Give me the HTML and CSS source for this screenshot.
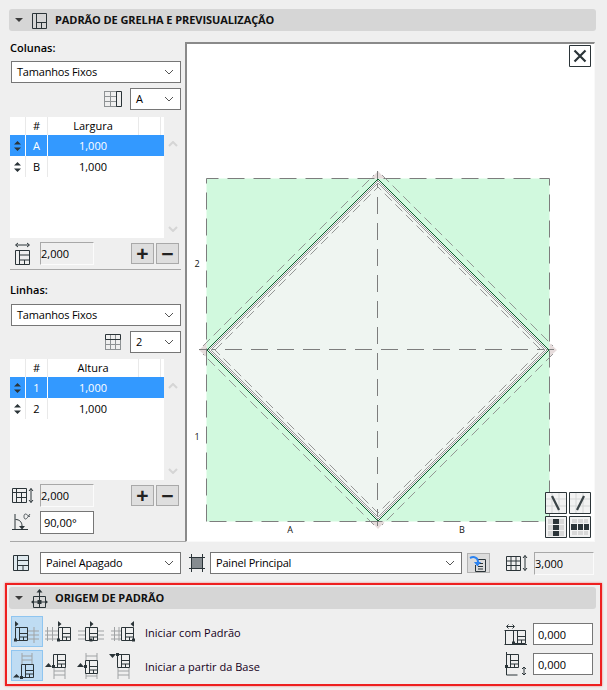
FILE: index.html
```html
<!DOCTYPE html>
<html lang="pt">
<head>
<meta charset="utf-8">
<title>Padrão de grelha</title>
<link rel="stylesheet" href="styles.css">
</head>
<body>
<svg class="defs" width="0" height="0">
  <defs>
    <symbol id="chev" viewBox="0 0 10 6"><path class="s-chev" d="M1 1l4 4 4-4"/></symbol>
    <symbol id="sort" viewBox="0 0 7 10"><path class="f-dark" d="M3.500 0L7 3.500H0zM3.500 10L0 6.500H7z"/></symbol>
    <symbol id="up" viewBox="0 0 10 6"><path class="s-scroll" d="M1 5l4-4 4 4"/></symbol>
    <symbol id="down" viewBox="0 0 10 6"><path class="s-scroll" d="M1 1l4 4 4-4"/></symbol>
    <symbol id="cell" viewBox="0 0 13 14"><path class="s-dark" d="M.5.5H12.500V13.500H.5ZM4.500.5V13.500M4.500 6.500H12.500M4.500 10H12.500M8.500 10V13.500"/></symbol>
  </defs>
</svg>

<main class="app">
  <header class="bar">
    <span class="caret"></span>
    <svg class="bar-icon" width="17" height="17" viewBox="0 0 17 17"><path class="s-dark" d="M1.500 1.500H15.500V16.500H1.500ZM5.500 1.500V16.500M5.500 10.500H15.500M10.500 10.500V16.500"/></svg>
    <h2 class="bar-title">PADRÃO DE GRELHA E PREVISUALIZAÇÃO</h2>
  </header>

  <div class="grid-area">
    <aside class="side">
      <div class="field-label">Colunas:</div>
      <div class="select"><span>Tamanhos Fixos</span><svg class="chev" width="10" height="6"><use href="#chev"/></svg></div>
      <div class="pick-row">
        <svg width="18" height="18" viewBox="0 0 18 18"><path class="s-gray" d="M.5 1.500H12M.5 6.500H12M.5 11.500H12M.5 16.500H12M.5 1V17M6.500 1V17M12.500 1V17"/><path class="s-dark" d="M12.500 1.500H17.500V16.500H12.500Z"/></svg>
        <div class="select small"><span>A</span><svg class="chev" width="10" height="6"><use href="#chev"/></svg></div>
      </div>
      <div class="list">
        <div class="tbl">
          <div class="tr head"><div></div><div>#</div><div>Largura</div><div></div></div>
          <div class="tr sel"><div><svg width="7" height="10"><use href="#sort"/></svg></div><div>A</div><div>1,000</div><div></div></div>
          <div class="tr"><div><svg width="7" height="10"><use href="#sort"/></svg></div><div>B</div><div>1,000</div></div>
        </div>
        <div class="scroll"><svg width="10" height="6"><use href="#up"/></svg><svg width="10" height="6"><use href="#down"/></svg></div>
      </div>
      <div class="total-row">
        <svg width="17" height="23" viewBox="0 0 17 23"><path class="s-dark" d="M2 3H15M4 1L1.500 3 4 5M13 1L15.500 3 13 5M1.500 8.500H15.500V22.500H1.500ZM5.500 8.500V22.500M5.500 13H15.500M5.500 18H15.500M10.500 18V22.500"/></svg>
        <div class="input off">2,000</div>
        <div class="pm"><button class="pm-btn" type="button">+</button><button class="pm-btn" type="button">−</button></div>
      </div>
      <hr class="rule">

      <div class="field-label lines">Linhas:</div>
      <div class="select"><span>Tamanhos Fixos</span><svg class="chev" width="10" height="6"><use href="#chev"/></svg></div>
      <div class="pick-row">
        <svg width="18" height="18" viewBox="0 0 18 18"><path class="s-gray" d="M1 6.500H17M1 11.500H17M1 16.500H17M1.500 6V17M6.500 1V17M11.500 1V17M16.500 6V17"/><path class="s-dark" d="M1.500 1.500H16.500V6.500H1.500Z"/></svg>
        <div class="select small"><span>2</span><svg class="chev" width="10" height="6"><use href="#chev"/></svg></div>
      </div>
      <div class="list lines-list">
        <div class="tbl">
          <div class="tr head"><div></div><div>#</div><div>Altura</div><div></div></div>
          <div class="tr sel"><div><svg width="7" height="10"><use href="#sort"/></svg></div><div>1</div><div>1,000</div><div></div></div>
          <div class="tr"><div><svg width="7" height="10"><use href="#sort"/></svg></div><div>2</div><div>1,000</div></div>
        </div>
        <div class="scroll"><svg width="10" height="6"><use href="#up"/></svg><svg width="10" height="6"><use href="#down"/></svg></div>
      </div>
      <div class="total-row lines-total">
        <svg width="23" height="17" viewBox="0 0 23 17"><path class="s-dark" d="M.5 1.500H14.500V15.500H.5ZM.5 5.500H14.500M4.500 1.500V15.500M9.500 5.500V15.500M4.500 10.500H14.500M19 1.500V15.500M17 4L19 1.500 21 4M17 13L19 15.500 21 13"/></svg>
        <div class="input off">2,000</div>
        <div class="pm"><button class="pm-btn" type="button">+</button><button class="pm-btn" type="button">−</button></div>
      </div>
      <div class="angle-row">
        <svg width="19" height="19" viewBox="0 0 19 19"><path class="s-dark" d="M3 1V17M0 16.500H16M3.500 6.500C7.500 6.500 10 9 10 13"/><path class="f-dark" d="M7 13H13L10 16.500Z"/><path class="s-thin" d="M18 3.500C16 3.500 15 1 13.500 1 12.500 1 12 2 12 3.500S12.500 6 13.500 6C15 6 16 3.500 18 1"/></svg>
        <div class="input">90,00°</div>
      </div>
    </aside>

    <section class="preview">
      <svg class="plan" width="407" height="497" viewBox="187 44 407 497">
        <rect class="green" x="206.500" y="178.500" width="343" height="343"/>
        <path class="diamond-fill" d="M378 179L549 350 378 521 207 350Z"/>
        <path class="pink" d="M378 171L385 178.500H371ZM378 529L371 521.500H385ZM199 350L206.500 343V357ZM557 350L549.500 357V343Z"/>
        <path class="dash-main" d="M206.500 521.500V178.500H549.500V521.500H206.500M377.500 171V528M199 349.500H557"/>
        <path class="line-white" d="M378 182L546 350 378 518 210 350Z"/>
        <path class="line-green" d="M378 179L549 350 378 521 207 350Z"/>
        <path class="line-gray" d="M378 181L547 350 378 519 209 350Z"/>
        <path class="line-gray" d="M378 183L545 350 378 517 211 350Z"/>
        <path class="dash-thin" d="M203 346L374 175M382 175L553 346M553 354L382 525M374 525L203 354"/>
        <path class="dash-thin" d="M215 350L378 187 541 350 378 513Z"/>
        <text class="plan-text" x="290" y="533" text-anchor="middle">A</text>
        <text class="plan-text" x="462" y="533" text-anchor="middle">B</text>
        <text class="plan-text" x="197" y="267" text-anchor="middle">2</text>
        <text class="plan-text" x="197" y="440" text-anchor="middle">1</text>
      </svg>
      <svg class="close" width="22" height="22" viewBox="0 0 22 22"><path class="s-box" d="M.5.5H21.500V21.500H.5Z"/><path class="s-x" d="M5.500 5.500L16.500 16.500M16.500 5.500L5.500 16.500"/></svg>
      <div class="view-btns">
        <svg width="22" height="22" viewBox="0 0 22 22"><rect class="cell-bg" x=".5" y=".5" width="21" height="21"/><path class="s-light" d="M1 7H21M1 14H21M7 1V21M14 1V21"/><path class="s-thick" d="M7 4L14 18"/><path class="s-box" d="M.5.5H21.500V21.500H.5Z"/></svg>
        <svg width="22" height="22" viewBox="0 0 22 22"><rect class="cell-bg" x=".5" y=".5" width="21" height="21"/><path class="s-light" d="M1 7H21M1 14H21M7 1V21M14 1V21"/><path class="s-thick" d="M15 4L8 18"/><path class="s-box" d="M.5.5H21.500V21.500H.5Z"/></svg>
        <svg width="22" height="22" viewBox="0 0 22 22"><rect class="cell-bg" x=".5" y=".5" width="21" height="21"/><path class="f-light" d="M3 3h5v5H3zM14 3h5v5h-5zM3 9h5v5H3zM14 9h5v5h-5zM3 15h5v5H3zM14 15h5v5h-5z"/><path class="f-dark" d="M8 3h6v5H8zM8 9h6v5H8zM8 15h6v5H8z"/><path class="s-box" d="M.5.5H21.500V21.500H.5Z"/></svg>
        <svg width="22" height="22" viewBox="0 0 22 22"><rect class="cell-bg" x=".5" y=".5" width="21" height="21"/><path class="f-light" d="M3 3h5v4H3zM9 3h5v4H9zM15 3h4v4h-4zM3 15h5v4H3zM9 15h5v4H9zM15 15h4v4h-4z"/><path class="f-dark" d="M2 8h6v6H2zM9 8h5v6H9zM15 8h5v6h-5z"/><path class="s-box" d="M.5.5H21.500V21.500H.5Z"/></svg>
      </div>
    </section>
  </div>

  <hr class="rule-mid">

  <div class="panel-row">
    <svg class="pr-icon1" width="18" height="18" viewBox="0 0 18 18"><rect class="f-tint" x="1" y="1" width="16" height="16"/><path class="s-dark" d="M1.500 1.500H16.500V16.500H1.500ZM5.500 1.500V16.500M5.500 6.500H16.500M5.500 11.500H16.500M11 11.500V16.500"/></svg>
    <div class="select panel-a"><span>Painel Apagado</span><svg class="chev" width="10" height="6"><use href="#chev"/></svg></div>
    <svg class="pr-icon2" width="16" height="18" viewBox="0 0 16 18"><rect class="f-mid" x="2" y="3" width="12" height="12"/><path class="s-box" d="M2.500 0V18M13.500 0V18M0 3.500H16M0 14.500H16"/></svg>
    <div class="select panel-b"><span>Painel Principal</span><svg class="chev" width="10" height="6"><use href="#chev"/></svg></div>
    <div class="doc-btn">
      <svg width="23" height="20" viewBox="0 0 23 20"><path class="s-dark" d="M11 5.500H18.500V17.500H8.500V11M11 9.500H16M11 12.500H16M11 15H16"/><path class="s-blue" d="M3 4C7 2 11 3.500 11 8"/><path class="f-blue" d="M7 8H14L10.500 12.500Z"/></svg>
    </div>
    <svg class="pr-icon3" width="22" height="18" viewBox="0 0 22 18"><path class="s-dark" d="M.5 2.500H14.500V16.500H.5ZM.5 7H14.500M.5 11.500H14.500M5 2.500V16.500M10 2.500V16.500M19 1.500V16.500M17 4L19 1.500 21 4M17 14L19 16.500 21 14"/></svg>
    <div class="input off wide">3,000</div>
  </div>

  <section class="origin">
    <header class="bar origin-bar">
      <span class="caret"></span>
      <svg class="bar-icon" width="17" height="19" viewBox="0 0 17 19"><path class="s-dark" d="M2.500 7.500H14.500V18.500H2.500ZM8.500 1V18.500M2.500 13H14.500"/><path class="f-dark" d="M8.500 0L11.500 3.500H5.500ZM0 13L3 10.500V15.500ZM17 13L14 10.500V15.500Z"/><rect class="f-dark" x="6.500" y="11" width="4" height="4"/></svg>
      <h2 class="bar-title">ORIGEM DE PADRÃO</h2>
    </header>
    <div class="origin-body">
      <div class="origin-left">
        <div class="origin-row">
          <div class="tile on"><svg width="30" height="29" viewBox="1 1 30 29"><path class="s-gray2" d="M17 15H28M17 19H28M17 23H28M23 11V27"/><use href="#cell" x="4" y="11" width="13" height="14"/><path class="f-dark" d="M3 22.500h3v3H3zM4 5l3.500 3L4 11z"/></svg></div>
          <div class="tile"><svg width="30" height="29" viewBox="1 1 30 29"><path class="s-gray2" d="M1 15H14M1 19H14M1 23H14M3.500 11V25M8.500 11V25"/><use href="#cell" x="14" y="11" width="13" height="14"/><path class="f-dark" d="M13 22.500h3v3h-3zM14 5l3.500 3L14 11z"/></svg></div>
          <div class="tile"><svg width="30" height="29" viewBox="1 1 30 29"><path class="s-gray2" d="M1 15H8M1 19H8M1 23H8M21 15H27M21 19H27M21 23H27"/><use href="#cell" x="8" y="11" width="13" height="14"/><path class="f-dark" d="M12.500 22.500h3v3h-3zM13 5l3.500 3L13 11z"/></svg></div>
          <div class="tile"><svg width="30" height="29" viewBox="1 1 30 29"><path class="s-gray2" d="M1 15H12M1 19H12M1 23H12M4.500 11V25M9 11V25"/><use href="#cell" x="11" y="11" width="13" height="14"/><path class="f-dark" d="M22 22.500h3v3h-3zM24 5l-3.500 3L24 11z"/></svg></div>
          <span class="origin-label">Iniciar com Padrão</span>
        </div>
        <div class="origin-row">
          <div class="tile on"><svg width="30" height="29" viewBox="1 1 30 29"><path class="s-gray2" d="M11 3V14M21 3V14M11 6H21M11 10H21"/><use href="#cell" x="10" y="14" width="13" height="14"/><path class="f-dark" d="M9 26h3v3H9zM5.500 24L9 27.500H2z"/></svg></div>
          <div class="tile"><svg width="30" height="29" viewBox="1 1 30 29"><path class="s-gray2" d="M10 17V29M21 17V29M10 21H21M10 25H21"/><use href="#cell" x="9" y="4" width="13" height="14"/><path class="f-dark" d="M8 15h3v3H8zM4.500 13L8 17H1z"/></svg></div>
          <div class="tile"><svg width="30" height="29" viewBox="1 1 30 29"><path class="s-gray2" d="M9 3V10M20 3V10M9 6H20M9 23V29M20 23V29M9 26H20"/><use href="#cell" x="8" y="10" width="13" height="14"/><path class="f-dark" d="M7 15h3v3H7zM3.500 13L7 17H0z"/></svg></div>
          <div class="tile"><svg width="30" height="29" viewBox="1 1 30 29"><path class="s-gray2" d="M8 18V29M19 18V29M8 21H19M8 25H19"/><use href="#cell" x="7" y="4" width="13" height="14"/><path class="f-dark" d="M6 3h3v3H6zM2.500 8L6 4H-1z"/></svg></div>
          <span class="origin-label">Iniciar a partir da Base</span>
        </div>
      </div>
      <div class="origin-right">
        <div class="offset-row">
          <svg width="24" height="21" viewBox="0 0 24 21"><path class="s-dark" d="M1.500 6V20.500M.5 6.500H10M.5 20.500H23M3 2.500H10M4.500.5L2.500 2.500 4.500 4.500M8.500.5L10.500 2.500 8.500 4.500"/><use href="#cell" x="9" y="6" width="13" height="14"/><path class="f-dark" d="M8 17.500h3v3H8z"/></svg>
          <div class="input">0,000</div>
        </div>
        <div class="offset-row">
          <svg width="24" height="24" viewBox="0 0 24 24"><path class="s-dark" d="M2.500 0V23M13.500 23H2.500M20 15V23M18 17L20 15 22 17M18 21L20 23 22 21"/><use href="#cell" x="2" y="2" width="13" height="14"/><path class="f-dark" d="M1 13h3v3H1z"/></svg>
          <div class="input">0,000</div>
        </div>
      </div>
    </div>
  </section>
</main>
</body>
</html>
```

FILE: styles.css
```css
* { box-sizing: border-box; }
html, body { margin: 0; padding: 0; }
body {
  background: #efefef;
  color: #000;
  font: 11px/1 "Open Sans", "Noto Sans", sans-serif;
  width: 607px;
  height: 690px;
  overflow: hidden;
}
.defs { position: absolute; }
svg { display: block; flex: none; overflow: visible; }

.s-dark, .s-box, .s-gray, .s-gray2, .s-light, .s-thin, .s-x, .s-thick, .s-blue, .s-chev, .s-scroll { fill: none; }
.s-dark { stroke: #2b3438; stroke-width: 1; }
.s-box { stroke: #2b3438; stroke-width: 1; }
.s-gray { stroke: #8e9294; stroke-width: 1; }
.s-gray2 { stroke: #a0a3a5; stroke-width: 1; }
.s-light { stroke: #d4d6d6; stroke-width: 1; }
.s-thin { stroke: #2b3438; stroke-width: .8; }
.s-x { stroke: #2b3438; stroke-width: 2.200; }
.s-thick { stroke: #3a4347; stroke-width: 2.200; }
.s-blue { stroke: #2b82f0; stroke-width: 2; }
.s-chev { stroke: #555; stroke-width: 1; }
.s-scroll { stroke: #d5d5d5; stroke-width: 2; }
.f-dark { fill: #2b3438; }
.f-light { fill: #d8d8d8; }
.f-blue { fill: #2b82f0; }
.f-tint { fill: #dfe9ee; }
.f-mid { fill: #868c90; }
.cell-bg { fill: #f2f2f2; }

.bar {
  display: flex;
  align-items: center;
  height: 22px;
  margin: 9px 11px 0 9px;
  padding-left: 6px;
  background: #d6d6d6;
  border-radius: 3px;
}
.caret {
  width: 0;
  height: 0;
  border-left: 4px solid transparent;
  border-right: 4px solid transparent;
  border-top: 4px solid #3c3c3c;
  margin-right: 8px;
}
.bar-icon { margin-right: 7px; }
.bar-title {
  margin: 0 0 2px;
  font: 700 11px/1 "Open Sans", "Noto Sans", sans-serif;
  letter-spacing: -.08px;
  color: #111;
}

.grid-area { display: flex; margin-top: 11px; padding-left: 10px; }
.side { width: 171px; }
.field-label { height: 19px; font-weight: 600; line-height: 11px; }
.field-label.lines { height: 20px; margin-top: 14px; }

.select {
  display: flex;
  align-items: center;
  justify-content: space-between;
  height: 22px;
  margin-left: 1px;
  padding: 0 6px 1px 5px;
  background: #fff;
  border: 1px solid #767676;
  letter-spacing: -.2px;
}
.select.small { width: 51px; margin-left: 8px; }
.chev { margin-top: 1px; }

.pick-row {
  display: flex;
  align-items: center;
  justify-content: flex-end;
  height: 22px;
  margin-top: 5px;
}

.list { display: flex; margin-top: 7px; height: 121px; }
.lines-list { margin-top: 6px; }
.tbl { width: 154px; background: #fff; }
.tr {
  display: grid;
  grid-template-columns: 16px 22px 91px 22px;
  height: 21px;
  text-align: center;
}
.tr > div {
  display: flex;
  align-items: center;
  justify-content: center;
  border-right: 1px solid #e9e9e9;
}
.tr.head { height: 18px; }
.tr.head > div { padding-bottom: 2px; }
.tr.sel { background: #3399ff; color: #fff; }
.tr.sel > div { border-right-color: #fff; }
.tr.sel > div:nth-child(3), .tr.sel > div:nth-child(4) { border-right-color: transparent; }
.tr > div:nth-child(3) { border-right-color: transparent; }
.head > div:nth-child(3) { border-right-color: #e9e9e9; }
.tr:not(.head):not(.sel) > div:nth-child(3) { border-right-color: transparent; }
.scroll {
  display: flex;
  flex-direction: column;
  justify-content: space-between;
  align-items: center;
  width: 17px;
  padding: 24px 0 6px;
}

.total-row { display: flex; align-items: center; height: 23px; margin-top: 4px; padding-left: 4px; }
.total-row > svg { margin-right: 9px; }
.lines-total { padding-left: 2px; }
.lines-total > svg { margin-right: 5px; }

.input {
  display: flex;
  align-items: center;
  height: 23px;
  padding-left: 3px;
  width: 54px;
  background: #fff;
  border: 1px solid #767676;
}
.input.off {
  background: #efefef;
  border: 1px solid;
  border-color: #a8a8a8 #fbfbfb #fbfbfb #a8a8a8;
  padding-left: 0;
}
.pm { display: flex; gap: 2px; margin-left: auto; margin-right: 2px; }
.pm-btn {
  width: 23px;
  height: 21px;
  padding: 0;
  background: #dedede;
  border: 1px solid #a9a9a9;
  color: #222;
  font: 700 21px/17px "Liberation Sans", sans-serif;
}
.rule { height: 1px; margin: 4px 0 0; border: 0; background: #a8a8a8; }
.angle-row { display: flex; align-items: center; margin-top: 4px; padding-left: 2px; }
.angle-row > svg { margin-right: 9px; }

.preview {
  position: relative;
  width: 410px;
  height: 500px;
  margin-left: 4px;
  background: #fff;
  border: 1px solid;
  border-width: 2px 1px 1px 2px;
  border-color: #8a8a8a #f9f9f9 #f9f9f9 #8a8a8a;
}
.green { fill: #d1f9de; }
.diamond-fill { fill: #eff5f1; }
.dash-main { fill: none; stroke: #7d7d7d; stroke-width: 1; stroke-dasharray: 17 9; }
.pink { fill: #e6dcdc; }
.line-white { fill: none; stroke: #fff; stroke-width: 2; }
.line-gray { fill: none; stroke: #8f8f8f; stroke-width: .9; }
.line-green { fill: none; stroke: #0a5c2c; stroke-width: 1; }
.dash-thin { fill: none; stroke: #8b8b8b; stroke-width: .9; stroke-dasharray: 10 5; }
.plan-text { font: 9px "Open Sans", "Noto Sans", sans-serif; fill: #111; }

.close { position: absolute; top: 1px; right: 3px; }
.view-btns {
  position: absolute;
  right: 3px;
  bottom: 3px;
  display: grid;
  grid-template-columns: 22px 22px;
  gap: 2px;
}

.rule-mid { height: 1px; margin: -1px 420px 0 10px; border: 0; background: #a8a8a8; }

.panel-row { display: flex; align-items: center; height: 22px; margin-top: 10px; padding-left: 12px; }
.panel-a { width: 141px; margin-left: 10px; }
.pr-icon2 { margin-left: 8px; }
.panel-b { width: 252px; margin-left: 5px; }
.doc-btn {
  width: 23px;
  height: 20px;
  margin-left: 5px;
  background: #dcdcdc;
  border: 1px solid #b2b2b2;
}
.doc-btn svg { margin: 0 -1px; }
.pr-icon3 { margin-left: 16px; }
.input.wide { width: 60px; height: 23px; margin-left: 6px; }

.origin {
  width: 597px;
  height: 103px;
  margin: 9px 0 0 5px;
  border: 2px solid #ee2020;
  box-shadow: 0 0 2px rgba(240, 40, 40, .6);
}
.origin-bar { margin: 2px 4px 0 2px; }
.origin-body { display: flex; justify-content: space-between; padding: 7px 7px 0 4px; }
.origin-row { display: flex; align-items: center; gap: 1px; height: 31px; margin-bottom: 3px; }
.tile {
  display: flex;
  align-items: center;
  justify-content: center;
  width: 32px;
  height: 31px;
  border: 1px solid transparent;
}
.tile.on { background: #bfdcf3; border-color: #8fc5f0; }
.origin-label { margin-left: 2px; padding-top: 1px; color: #140020; }
.origin-right { display: flex; flex-direction: column; gap: 7px; padding-top: 7px; }
.offset-row { display: flex; align-items: center; gap: 5px; }
.offset-row .input { width: 60px; height: 22px; padding-left: 4px; }
```
